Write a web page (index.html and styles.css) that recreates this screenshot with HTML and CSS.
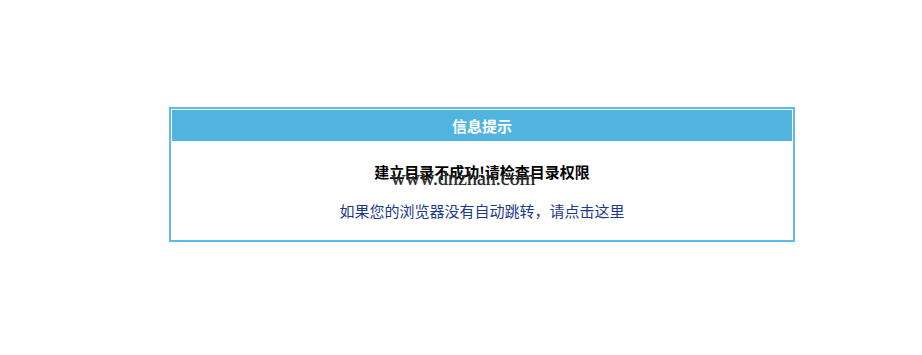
FILE: index.html
```html
<!DOCTYPE html>
<html>
<head>
  <meta charset="UTF-8">
  <title>信息提示</title>
  <link rel="stylesheet" href="styles.css">
</head>
<body>
  <!-- Message box -->
  <div class="msg-box">
    <div class="msg-head">信息提示</div>
    <div class="msg-body">
      <div class="msg-text">
        建立目录不成功!请检查目录权限
        <span class="watermark">www.dnzhan.com</span>
      </div>
      <a class="msg-link" href="#">如果您的浏览器没有自动跳转，请点击这里</a>
    </div>
  </div>
</body>
</html>
```

FILE: styles.css
```css
body {
  margin: 0;
  background-color: #fff;
  font-family: "Noto Sans CJK SC", "Microsoft YaHei", sans-serif;
}

/* Outer box with thin blue frame */
.msg-box {
  width: 626px;
  box-sizing: border-box;
  margin: 107px 0 0 169px;
  border: 2px solid #5cbbe8;
  padding: 1px;
}

.msg-head {
  height: 31px;
  line-height: 31px;
  background-color: #51b4de;
  color: #fff;
  font-size: 15px;
  font-weight: bold;
  text-align: center;
}

.msg-body {
  padding: 21px 0 18px;
  text-align: center;
}

.msg-text {
  position: relative;
  height: 20px;
  line-height: 20px;
  margin-bottom: 19px;
  font-size: 15px;
  font-weight: bold;
  color: #000;
}

/* Watermark lying over the message */
.watermark {
  position: absolute;
  left: 219px;
  top: 6px;
  font-family: "Liberation Serif", serif;
  font-size: 20px;
  font-weight: normal;
  line-height: 20px;
  color: #2a2a2a;
  text-shadow: 0 0 1px rgba(0, 0, 0, 0.5);
}

.msg-link {
  display: block;
  height: 20px;
  line-height: 20px;
  font-size: 15px;
  color: #1b3a8c;
  text-decoration: none;
}
```
